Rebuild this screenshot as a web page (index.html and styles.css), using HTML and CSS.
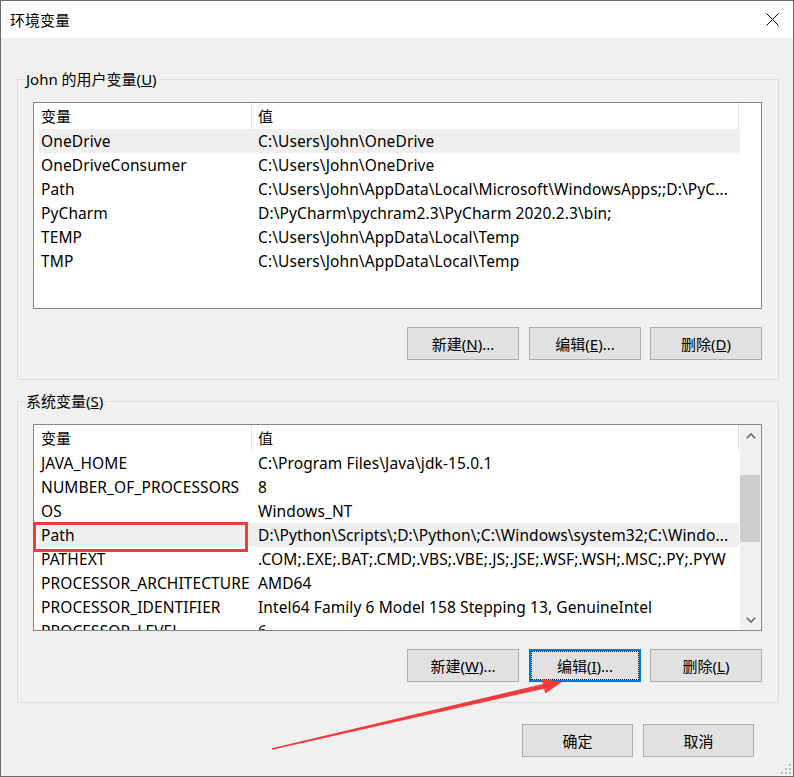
FILE: index.html
```html
<!DOCTYPE html>
<html lang="zh-CN">
<head>
<meta charset="utf-8">
<title>环境变量</title>
<link rel="stylesheet" href="styles.css">
</head>
<body>
<div class="window">
  <div class="titlebar">
    <span class="title">环境变量</span>
    <svg class="close" width="13" height="13" viewBox="0 0 13 13"><path d="M0.5 0.5 L12.5 12.5 M12.5 0.5 L0.5 12.5" stroke="#000" stroke-width="1" fill="none"/></svg>
  </div>
  <div class="content">
    <fieldset class="group group-user">
      <legend>John 的用户变量(<u>U</u>)</legend>
      <div class="group-body">
        <div class="list">
          <div class="list-main">
            <div class="hdr"><div class="hc1">变量</div><div class="hc2">值</div></div>
            <div class="row sel"><div class="c1">OneDrive</div><div class="c2">C:\Users\John\OneDrive</div></div>
            <div class="row"><div class="c1">OneDriveConsumer</div><div class="c2">C:\Users\John\OneDrive</div></div>
            <div class="row"><div class="c1">Path</div><div class="c2">C:\Users\John\AppData\Local\Microsoft\WindowsApps;;D:\PyC...</div></div>
            <div class="row"><div class="c1">PyCharm</div><div class="c2">D:\PyCharm\pychram2.3\PyCharm 2020.2.3\bin;</div></div>
            <div class="row"><div class="c1">TEMP</div><div class="c2">C:\Users\John\AppData\Local\Temp</div></div>
            <div class="row"><div class="c1">TMP</div><div class="c2">C:\Users\John\AppData\Local\Temp</div></div>
          </div>
        </div>
        <div class="btns">
          <button class="btn">新建(<u>N</u>)...</button>
          <button class="btn">编辑(<u>E</u>)...</button>
          <button class="btn btn-last">删除(<u>D</u>)</button>
        </div>
      </div>
    </fieldset>
    <fieldset class="group group-sys">
      <legend>系统变量(<u>S</u>)</legend>
      <div class="group-body">
        <div class="list list-sys">
          <div class="list-main">
            <div class="hdr"><div class="hc1">变量</div><div class="hc2">值</div></div>
            <div class="row"><div class="c1">JAVA_HOME</div><div class="c2">C:\Program Files\Java\jdk-15.0.1</div></div>
            <div class="row"><div class="c1">NUMBER_OF_PROCESSORS</div><div class="c2">8</div></div>
            <div class="row"><div class="c1">OS</div><div class="c2">Windows_NT</div></div>
            <div class="row sel"><div class="c1">Path</div><div class="c2">D:\Python\Scripts\;D:\Python\;C:\Windows\system32;C:\Windo...</div></div>
            <div class="row"><div class="c1">PATHEXT</div><div class="c2">.COM;.EXE;.BAT;.CMD;.VBS;.VBE;.JS;.JSE;.WSF;.WSH;.MSC;.PY;.PYW</div></div>
            <div class="row"><div class="c1">PROCESSOR_ARCHITECTURE</div><div class="c2">AMD64</div></div>
            <div class="row"><div class="c1">PROCESSOR_IDENTIFIER</div><div class="c2">Intel64 Family 6 Model 158 Stepping 13, GenuineIntel</div></div>
            <div class="row"><div class="c1">PROCESSOR_LEVEL</div><div class="c2">6</div></div>
          </div>
          <div class="scrollbar">
            <div class="sb-btn"><svg width="10" height="6" viewBox="0 0 10 6"><path d="M0.8 5.2 L5 1 L9.2 5.2" stroke="#606060" stroke-width="1.5" fill="none"/></svg></div>
            <div class="sb-track"><div class="sb-thumb"></div></div>
            <div class="sb-btn"><svg width="10" height="6" viewBox="0 0 10 6"><path d="M0.8 0.8 L5 5 L9.2 0.8" stroke="#606060" stroke-width="1.5" fill="none"/></svg></div>
          </div>
          <div class="mark"></div>
        </div>
        <div class="btns">
          <button class="btn">新建(<u>W</u>)...</button>
          <button class="btn focus">编辑(<u>I</u>)...</button>
          <button class="btn btn-last">删除(<u>L</u>)</button>
        </div>
      </div>
    </fieldset>
    <div class="footer">
      <button class="btn btn-ok">确定</button>
      <button class="btn btn-ok">取消</button>
    </div>
  </div>
  <svg class="grip" width="14" height="14" viewBox="0 0 14 14">
    <rect x="10" y="2" width="2" height="2" fill="#bcbcbc"/>
    <rect x="6" y="6" width="2" height="2" fill="#bcbcbc"/>
    <rect x="10" y="6" width="2" height="2" fill="#bcbcbc"/>
    <rect x="2" y="10" width="2" height="2" fill="#bcbcbc"/>
    <rect x="6" y="10" width="2" height="2" fill="#bcbcbc"/>
    <rect x="10" y="10" width="2" height="2" fill="#bcbcbc"/>
  </svg>
  <svg class="arrow" width="794" height="777" viewBox="0 0 794 777">
    <polygon points="271.8,748.3 542.9,683.9 541.8,679 562,682 545.2,693.6 544.1,688.7 272.2,749.7" fill="#f23c3c"/>
  </svg>
</div>
</body>
</html>
```

FILE: styles.css
```css
* { box-sizing: border-box; }
html, body { margin: 0; padding: 0; background: #fff; }
body {
  font-family: "Noto Sans", "Noto Sans CJK SC", sans-serif;
  font-size: 15px;
  color: #000;
}
.window {
  position: relative;
  width: 794px;
  height: 777px;
  border: 1px solid #6b6b6b;
  background: #f0f0f0;
  display: flex;
  flex-direction: column;
  overflow: hidden;
}
.titlebar {
  flex: none;
  height: 37px;
  background: #fff;
  display: flex;
  align-items: center;
  justify-content: space-between;
  padding: 0 14px 0 9px;
}
.title { font-size: 15px; line-height: 20px; }
.close { display: block; }
.content {
  flex: 1;
  display: flex;
  flex-direction: column;
  padding: 0 14px 0 16px;
}
.group {
  margin: 0;
  padding: 0;
  border: 1px solid #dcdcdc;
  min-width: 0;
}
.group-user { margin-top: 31px; }
.group-sys { margin-top: 11px; }
.group legend {
  margin-left: 7px;
  padding: 0 2px 0 1px;
  line-height: 21px;
  font-size: 15px;
}
.group-body { padding: 12px 16px 19px 15px; }
.group-sys .group-body { padding-bottom: 20px; }
.list {
  position: relative;
  height: 207px;
  border: 1px solid #828790;
  background: #fff;
  display: flex;
}
.list-main {
  flex: 1;
  overflow: hidden;
  min-width: 0;
}
.hdr {
  display: flex;
  height: 26px;
  line-height: 26px;
}
.hc1 {
  width: 218px;
  padding-left: 7px;
  border-right: 1px solid #e5e5e5;
}
.hc2 {
  width: 487px;
  padding-left: 6px;
  border-right: 1px solid #e5e5e5;
}
.row {
  display: flex;
  height: 24px;
  line-height: 24px;
  margin-left: 5px;
  width: 701px;
  white-space: nowrap;
  font-size: 15.5px;
  letter-spacing: 0.1px;
}
.row.sel { background: #efefef; }
.c1 {
  width: 212px;
  flex: none;
  padding-left: 2px;
  overflow: hidden;
}
.c2 {
  flex: 1;
  padding-left: 7px;
  overflow: hidden;
}
.scrollbar {
  flex: none;
  width: 21px;
  margin-left: 1px;
  background: #f0f0f0;
  display: flex;
  flex-direction: column;
}
.sb-btn {
  height: 21px;
  display: flex;
  align-items: center;
  justify-content: center;
  flex: none;
}
.sb-track { flex: 1; padding-top: 29px; }
.sb-thumb {
  height: 67px;
  margin-right: 1px;
  background: #cdcdcd;
}
.mark {
  position: absolute;
  left: -1px;
  top: 97px;
  width: 215px;
  height: 30px;
  border: 3px solid #f23c3c;
}
.btns {
  display: flex;
  justify-content: flex-end;
  gap: 10px;
  margin-top: 18px;
}
.btn {
  width: 112px;
  height: 33px;
  padding: 0;
  background: #e1e1e1;
  border: 1px solid #adadad;
  font-family: "Noto Sans", "Noto Sans CJK SC", sans-serif;
  font-size: 15px;
  color: #000;
  line-height: 20px;
}
.btn-last { margin-left: -1px; }
.btn.focus {
  border: 2px solid #0078d7;
  outline: 1px dotted #000;
  outline-offset: -3px;
}
.footer {
  display: flex;
  justify-content: flex-end;
  gap: 10px;
  margin-top: 21px;
  padding-right: 25px;
}
.btn-ok { width: 111px; }
.grip {
  position: absolute;
  right: 0;
  bottom: 0;
}
.arrow {
  position: absolute;
  left: -1px;
  top: -1px;
  pointer-events: none;
}
```
